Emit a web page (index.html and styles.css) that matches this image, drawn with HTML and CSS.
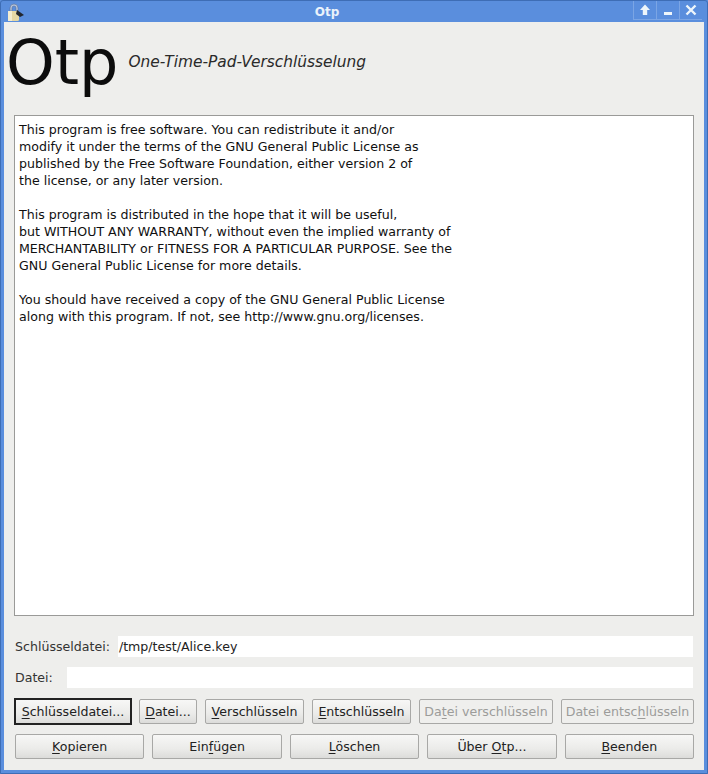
FILE: index.html
```html
<!DOCTYPE html>
<html lang="de">
<head>
<meta charset="utf-8">
<title>Otp</title>
<link rel="stylesheet" href="styles.css">
</head>
<body>
<div class="window">
  <header class="titlebar">
    <svg class="app-icon" width="20" height="20" viewBox="0 0 20 20">
      <path d="M5 6 a4 4 0 0 1 8 0 v3 h-2 v-3 a2 2 0 0 0 -4 0 v3 h-2z" fill="#b9c6dc" stroke="#5b6f94" stroke-width=".6"/>
      <rect x="3" y="9" width="11" height="10" rx="1.5" fill="#e5d7a4"/>
      <rect x="3" y="9" width="4" height="10" fill="#f3ecd0"/>
      <path d="M12 8 l7 5 -4 2 -4 -3z" fill="#22262e"/>
    </svg>
    <span class="title">Otp</span>
    <div class="wm-buttons">
      <span class="wm-btn"><svg width="14" height="14" viewBox="0 0 14 14"><path d="M7 1.5 L12 7 H9.2 V12 H4.8 V7 H2z" fill="#eef6fb"/></svg></span>
      <span class="wm-btn"><svg width="14" height="14" viewBox="0 0 14 14"><rect x="3" y="9" width="8" height="3" fill="#eef6fb"/></svg></span>
      <span class="wm-btn"><svg width="14" height="14" viewBox="0 0 14 14"><path d="M2.5 2.5 L11.5 11.5 M11.5 2.5 L2.5 11.5" stroke="#eef6fb" stroke-width="2.4"/></svg></span>
    </div>
  </header>
  <main class="content">
    <div class="heading">
      <h1 class="app-name">Otp</h1>
      <p class="tagline">One-Time-Pad-Verschlüsselung</p>
    </div>
    <div class="textview">
      <p>This program is free software. You can redistribute it and/or<br>modify it under the terms of the GNU General Public License as<br>published by the Free Software Foundation, either version 2 of<br>the license, or any later version.</p>
      <p>This program is distributed in the hope that it will be useful,<br>but WITHOUT ANY WARRANTY, without even the implied warranty of<br>MERCHANTABILITY or FITNESS FOR A PARTICULAR PURPOSE. See the<br>GNU General Public License for more details.</p>
      <p>You should have received a copy of the GNU General Public License<br>along with this program. If not, see http://www.gnu.org/licenses.</p>
    </div>
    <div class="field field-key">
      <label class="field-label">Schlüsseldatei:</label>
      <div class="entry">/tmp/test/Alice.key</div>
    </div>
    <div class="field field-file">
      <label class="field-label">Datei:</label>
      <div class="entry"></div>
    </div>
    <div class="row-top">
      <button class="btn btn-default"><u>S</u>chlüsseldatei...</button>
      <button class="btn"><u>D</u>atei...</button>
      <button class="btn"><u>V</u>erschlüsseln</button>
      <button class="btn"><u>E</u>ntschlüsseln</button>
      <button class="btn" disabled>Da<u>t</u>ei verschlüsseln</button>
      <button class="btn" disabled>Datei entsc<u>h</u>lüsseln</button>
    </div>
    <div class="row-bottom">
      <button class="btn"><u>K</u>opieren</button>
      <button class="btn">Ein<u>f</u>ügen</button>
      <button class="btn"><u>L</u>öschen</button>
      <button class="btn">Über <u>O</u>tp...</button>
      <button class="btn"><u>B</u>eenden</button>
    </div>
  </main>
</div>
</body>
</html>
```
FILE: styles.css
```css
* { box-sizing: border-box; }
html, body { margin: 0; height: 100%; }
body { font-family: "DejaVu Sans", sans-serif; font-size: 12.6px; color: #101010; background: #5b8fdc; }
.window {
  width: 708px; height: 774px; display: flex; flex-direction: column;
  background: #5a8edd; border: 1px solid #3e6db5; border-radius: 3px 3px 0 0;
  padding: 0 3px 3px;
}
.titlebar {
  height: 21px; flex: none; display: flex; align-items: center; position: relative;
  color: #eaf2fb; font-weight: bold; font-size: 12px; padding: 0 70px 0 16px;
}
.app-icon { position: absolute; left: 1px; top: 1px; }
.title { flex: 1; text-align: center; }
.wm-buttons { position: absolute; right: 2px; top: 0; display: flex; height: 19px; }
.wm-btn {
  width: 23px; display: flex; align-items: center; justify-content: center;
  border-left: 1px solid #7ba5e4; border-bottom: 1px solid #7ba5e4;
}
.content {
  flex: 1; background: #eeeeec; padding: 0 10px; display: flex; flex-direction: column;
  min-height: 0;
}
.heading { height: 93px; flex: none; display: flex; align-items: center; margin-left: -8px; padding-bottom: 12px; }
.app-name {
  margin: 0; font-weight: normal; font-size: 62px; line-height: 72px; color: #0c0c0c;
}
.tagline { margin: 0 0 2px 10px; font-style: italic; font-size: 15.4px; color: #2a2a2a; }
.textview {
  height: 501px; flex: none; background: #fff; border: 1px solid #9a9a98;
  padding: 5px 4px; line-height: 17px;
}
.textview p { margin: 0 0 17px; }
.field { display: flex; align-items: center; height: 21px; flex: none; }
.field-key { margin-top: 20px; }
.field-file { margin-top: 10px; }
.field-label { color: #333; padding: 0 0 1px 1px; }
.field-key .field-label { margin-right: 8px; }
.field-file .field-label { margin-right: 14px; }
.entry {
  flex: 1; height: 21px; background: #fff; line-height: 21px; padding-left: 1px; margin-right: 1px; color: #222;
}
.row-top {
  flex: none; margin-top: 10px; height: 27px; display: grid; align-items: center;
  grid-template-columns: 117px 58px 99px 99px 134px 133px; column-gap: 8px;
}
.row-bottom { flex: none; margin-top: 9px; height: 25px; display: flex; gap: 8px; padding-left: 1px; }
.row-bottom .btn { flex: 1; }
.btn {
  font: inherit; color: #222; height: 25px; padding: 0; margin: 0;
  border: 1px solid #a8a8a6; border-radius: 2px;
  background: linear-gradient(#f7f7f6, #ebebe9 60%, #dcdcda);
  white-space: nowrap;
}
.btn u { text-underline-offset: 2px; }
.btn:disabled { color: #9c9c9a; background: #efefed; }
.btn-default { height: 27px; width: 118px; border: 2px solid #222; border-radius: 0; }
```
